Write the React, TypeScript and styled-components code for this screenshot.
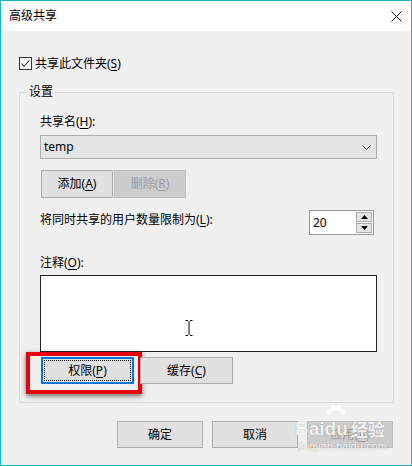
import React from "react";
import styled, { createGlobalStyle } from "styled-components";

const Global = createGlobalStyle`
  html, body { margin: 0; padding: 0; background: #ffffff; }
  body {
    font-family: "Noto Sans", "Noto Sans CJK SC", sans-serif;
    font-size: 12px;
    color: #000;
  }
  * { box-sizing: border-box; }
`;

const Window = styled.div`
  position: relative;
  width: 412px;
  height: 466px;
  border: 1px solid #17b2c8;
  display: flex;
  flex-direction: column;
  background: #f0f0f0;
  overflow: hidden;
`;

const TitleBar = styled.div`
  height: 30px;
  background: #ffffff;
  display: flex;
  align-items: center;
  justify-content: space-between;
  padding: 0 9px 0 8px;
  flex-shrink: 0;
`;

const Title = styled.span`
  font-size: 12px;
  line-height: 16px;
  color: #000;
`;

const Body = styled.div`
  flex: 1;
  display: flex;
  flex-direction: column;
  padding: 26px 17px 0 18px;
`;

const CheckRow = styled.div`
  display: flex;
  align-items: center;
  gap: 3px;
  height: 13px;
`;

const CheckBox = styled.span`
  width: 13px;
  height: 13px;
  border: 1px solid #333333;
  background: #ffffff;
  display: flex;
  align-items: center;
  justify-content: center;
`;

const Text = styled.span<{ $disabled?: boolean }>`
  font-size: 12px;
  line-height: 16px;
  color: ${(p) => (p.$disabled ? "#a0a0a0" : "#000")};
  white-space: nowrap;
  u { text-decoration-thickness: 1px; text-underline-offset: 2px; }
`;

const GroupBox = styled.div`
  position: relative;
  margin-top: 22px;
  border: 1px solid #dcdcdc;
  padding: 21px 16px 18px 20px;
  display: flex;
  flex-direction: column;
`;

const Legend = styled.span`
  position: absolute;
  top: -9px;
  left: 7px;
  padding: 0 2px;
  background: #f0f0f0;
  font-size: 12px;
  line-height: 16px;
`;

const Combo = styled.div`
  margin-top: 5px;
  height: 24px;
  border: 1px solid #adadad;
  background: #e5e5e5;
  display: flex;
  align-items: center;
  justify-content: space-between;
  padding: 0 5px 0 3px;
`;

const ButtonRow = styled.div<{ $gap: number; $top: number; $indent?: number }>`
  display: flex;
  gap: ${(p) => p.$gap}px;
  margin-top: ${(p) => p.$top}px;
  padding-left: ${(p) => p.$indent ?? 0}px;
`;

const Button = styled.div<{ $w: number; $h?: number; $disabled?: boolean; $focused?: boolean }>`
  position: relative;
  width: ${(p) => p.$w}px;
  height: ${(p) => p.$h ?? 27}px;
  display: flex;
  align-items: center;
  justify-content: center;
  background: ${(p) => (p.$disabled ? "#cccccc" : "#e1e1e1")};
  border: ${(p) =>
    p.$focused ? "2px solid #0078d7" : p.$disabled ? "1px solid #bfbfbf" : "1px solid #adadad"};
  font-size: 12px;
  line-height: 16px;
  color: ${(p) => (p.$disabled ? "#a0a0a0" : "#000")};
  u { text-decoration-thickness: 1px; text-underline-offset: 2px; }
  ${(p) =>
    p.$focused
      ? `&::after {
    content: "";
    position: absolute;
    inset: 1px;
    border: 1px dotted #000;
  }`
      : ""}
`;

const LimitRow = styled.div`
  margin-top: 12px;
  display: flex;
  justify-content: space-between;
  align-items: flex-start;
`;

const LimitLabel = styled(Text)`
  margin-top: 2px;
`;

const Spin = styled.div`
  width: 65px;
  height: 25px;
  margin-right: 3px;
  border: 1px solid #999999;
  background: #ffffff;
  display: flex;
  align-items: stretch;
  padding: 1px;
`;

const SpinValue = styled.div`
  flex: 1;
  display: flex;
  align-items: center;
  padding-left: 2px;
  font-size: 12px;
`;

const SpinButtons = styled.div`
  width: 16px;
  display: flex;
  flex-direction: column;
  gap: 1px;
`;

const SpinButton = styled.div`
  flex: 1;
  border: 1px solid #adadad;
  background: #e5e5e5;
  display: flex;
  align-items: center;
  justify-content: center;
`;

const NoteLabel = styled(Text)`
  margin-top: 20px;
`;

const NoteBox = styled.div`
  position: relative;
  margin-top: 4px;
  height: 77px;
  border: 1px solid #222222;
  background: #ffffff;
`;

const Cursor = styled.svg`
  position: absolute;
  left: 144px;
  top: 44px;
`;

const Highlight = styled.div`
  position: absolute;
  left: -15px;
  top: -5px;
  width: 116px;
  height: 42px;
  border: 4px solid #e8000b;
  box-shadow: 0 2px 5px rgba(0, 0, 0, 0.55);
  pointer-events: none;
`;

const HighlightWrap = styled.div`
  position: relative;
  display: flex;
`;

const Footer = styled.div`
  margin-top: 18px;
  display: flex;
  justify-content: flex-end;
  gap: 9px;
  margin-right: 1px;
`;

const Watermark = styled.div`
  position: absolute;
  left: 294px;
  top: 408px;
  display: flex;
  flex-direction: column;
  align-items: flex-start;
  color: rgba(255, 255, 255, 0.88);
  text-shadow: 0 0 1px rgba(0, 0, 0, 0.3);
  pointer-events: none;
`;

const WmMain = styled.div`
  display: flex;
  align-items: flex-end;
  font-family: "Liberation Sans", "Noto Sans CJK SC", sans-serif;
  font-weight: bold;
  font-size: 19px;
  line-height: 20px;
  position: relative;
  padding-top: 10px;
`;

const WmCn = styled.span`
  font-family: "Noto Sans CJK SC", sans-serif;
  font-size: 17px;
  margin-left: 3px;
`;

const WmUrl = styled.div`
  font-family: "Liberation Sans", sans-serif;
  font-size: 11px;
  line-height: 12px;
  margin-left: 3px;
  margin-top: 1px;
`;

const Paw = styled.svg`
  position: absolute;
  left: 30px;
  top: -4px;
`;

export default function App() {
  return (
    <>
      <Global />
      <Window>
        <TitleBar>
          <Title>高级共享</Title>
          <svg width="11" height="11" viewBox="0 0 11 11">
            <path d="M0.5 0.5 L10.5 10.5 M10.5 0.5 L0.5 10.5" stroke="#111" strokeWidth="1" fill="none" />
          </svg>
        </TitleBar>
        <Body>
          <CheckRow>
            <CheckBox>
              <svg width="11" height="11" viewBox="0 0 11 11">
                <path d="M1.5 5.5 L4 8.5 L9.5 2" stroke="#333" strokeWidth="1.1" fill="none" />
              </svg>
            </CheckBox>
            <Text>
              共享此文件夹(<u>S</u>)
            </Text>
          </CheckRow>

          <GroupBox>
            <Legend>设置</Legend>
            <Text>
              共享名(<u>H</u>):
            </Text>
            <Combo>
              <Text>temp</Text>
              <svg width="9" height="5" viewBox="0 0 9 5">
                <path d="M0.5 0.5 L4.5 4.5 L8.5 0.5" stroke="#444" strokeWidth="1" fill="none" />
              </svg>
            </Combo>
            <ButtonRow $gap={1} $top={11} $indent={1}>
              <Button $w={72} $h={28}>
                添加(<u>A</u>)
              </Button>
              <Button $w={72} $h={28} $disabled>
                删除(<u>R</u>)
              </Button>
            </ButtonRow>

            <LimitRow>
              <LimitLabel>
                将同时共享的用户数量限制为(<u>L</u>):
              </LimitLabel>
              <Spin>
                <SpinValue>20</SpinValue>
                <SpinButtons>
                  <SpinButton>
                    <svg width="7" height="4" viewBox="0 0 7 4">
                      <path d="M0 4 L3.5 0 L7 4 Z" fill="#000" />
                    </svg>
                  </SpinButton>
                  <SpinButton>
                    <svg width="7" height="4" viewBox="0 0 7 4">
                      <path d="M0 0 L3.5 4 L7 0 Z" fill="#000" />
                    </svg>
                  </SpinButton>
                </SpinButtons>
              </Spin>
            </LimitRow>

            <NoteLabel>
              注释(<u>O</u>):
            </NoteLabel>
            <NoteBox>
              <Cursor width="8" height="16" viewBox="0 0 8 16">
                <path
                  d="M0.5 0.5 H3 M5 0.5 H7.5 M4 1 V15 M0.5 15.5 H3 M5 15.5 H7.5"
                  stroke="#000"
                  strokeWidth="1"
                  fill="none"
                />
              </Cursor>
            </NoteBox>

            <ButtonRow $gap={6} $top={5} $indent={1}>
              <HighlightWrap>
                <Button $w={93} $focused>
                  权限(<u>P</u>)
                </Button>
                <Highlight />
              </HighlightWrap>
              <Button $w={93}>
                缓存(<u>C</u>)
              </Button>
            </ButtonRow>
          </GroupBox>

          <Footer>
            <Button $w={86}>确定</Button>
            <Button $w={86}>取消</Button>
            <Button $w={86} $disabled>
              应用(<u>A</u>)
            </Button>
          </Footer>
        </Body>
        <Watermark>
          <WmMain>
            <span>Bai</span>
            <span>du</span>
            <WmCn>经验</WmCn>
            <Paw width="22" height="16" viewBox="0 0 22 16">
              <ellipse cx="4" cy="7" rx="2.5" ry="3" fill="rgba(255,255,255,0.85)" />
              <ellipse cx="8.5" cy="3" rx="2.5" ry="3" fill="rgba(255,255,255,0.85)" />
              <ellipse cx="13.5" cy="3" rx="2.5" ry="3" fill="rgba(255,255,255,0.85)" />
              <ellipse cx="18" cy="7" rx="2.5" ry="3" fill="rgba(255,255,255,0.85)" />
            </Paw>
          </WmMain>
          <WmUrl>jingyan.baidu.com</WmUrl>
        </Watermark>
      </Window>
    </>
  );
}
